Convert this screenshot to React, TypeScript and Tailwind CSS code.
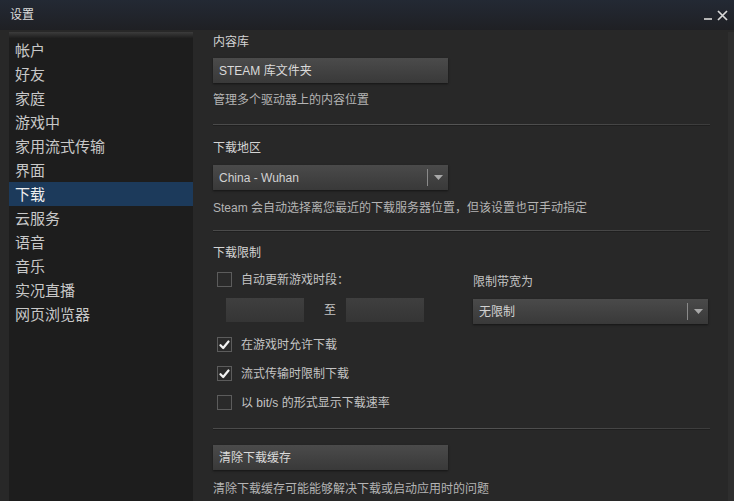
import React from 'react'

const font = { fontFamily: '"Liberation Sans", "Noto Sans CJK SC", sans-serif' }

const sideItems = ['帐户', '好友', '家庭', '游戏中', '家用流式传输', '界面', '下载', '云服务', '语音', '音乐', '实况直播', '网页浏览器']

function Checkbox({ checked }: { checked?: boolean }) {
  return (
    <div className="w-[15px] h-[15px] border border-[#5c5c5c] bg-[#2a2a2a] flex items-center justify-center shrink-0">
      {checked && (
        <svg width="11" height="10" viewBox="0 0 11 10">
          <path d="M1.5 5.2 L4.2 8 L9.5 1.5" fill="none" stroke="#f2f2f2" strokeWidth="2.2" strokeLinecap="round" strokeLinejoin="round" />
        </svg>
      )}
    </div>
  )
}

function CheckRow({ checked, label }: { checked?: boolean; label: string }) {
  return (
    <div className="flex items-center h-[15px] pl-[4px]">
      <Checkbox checked={checked} />
      <span className="ml-[9px] text-[12px] text-[#c4c4c4] leading-none">{label}</span>
    </div>
  )
}

function Dropdown({ value }: { value: string }) {
  return (
    <div className="w-[235px] h-[25px] flex items-center bg-gradient-to-b from-[#4a4a4a] to-[#393939] shadow-[0_1px_2px_rgba(0,0,0,0.5)]">
      <span className="flex-1 pl-[6px] text-[12px] text-[#d2d2d2]">{value}</span>
      <div className="w-px h-[17px] bg-[#8a8a8a]" />
      <div className="w-[20px] flex items-center justify-center">
        <svg width="9" height="5" viewBox="0 0 9 5">
          <path d="M0 0 H9 L4.5 5 Z" fill="#a8a8a8" />
        </svg>
      </div>
    </div>
  )
}

function Button({ label }: { label: string }) {
  return (
    <div className="w-[235px] h-[25px] flex items-center pl-[6px] bg-gradient-to-b from-[#4b4b4b] to-[#393939] shadow-[0_1px_2px_rgba(0,0,0,0.5)] text-[12px] text-[#dadada]">
      {label}
    </div>
  )
}

function Separator() {
  return (
    <div className="w-[497px]">
      <div className="h-px bg-gradient-to-r from-[#4a4a4a] via-[#555555] to-[#3c3c3c]" />
      <div className="h-px bg-[#1f1f1f]" />
    </div>
  )
}

export default function App() {
  return (
    <div className="w-[734px] h-[501px] bg-[#282828] flex flex-col overflow-hidden" style={font}>
      {/* title bar */}
      <div className="h-[30px] shrink-0 flex items-center justify-between bg-gradient-to-b from-[#232934] to-[#1f2024] pl-[10px] pr-[6px]">
        <span className="text-[12px] text-[#dcdcdc]">设置</span>
        <div className="flex items-end gap-[5px]">
          <div className="w-[8px] h-[2px] bg-[#b5b5b5] mb-[1px]" />
          <svg width="11" height="11" viewBox="0 0 11 11">
            <path d="M1 1 L10 10 M10 1 L1 10" stroke="#d8d8d8" strokeWidth="1.7" />
          </svg>
        </div>
      </div>

      <div className="flex flex-1 pt-[2px]">
        {/* sidebar */}
        <div className="ml-[9px] w-[184px] bg-[#1d1d1d] flex flex-col">
          <div className="h-[6px] bg-gradient-to-b from-[#3c3c3c] to-[#1f1f1f]" />
          {sideItems.map((item) => (
            <div
              key={item}
              className={`h-[24px] pl-[6px] pt-[2px] flex items-center text-[15px] ${item === '下载' ? 'bg-[#1c3a5b] text-[#f0f0f0]' : 'text-[#c8c8c8]'}`}
            >
              {item}
            </div>
          ))}
        </div>

        {/* content */}
        <div className="flex-1 pl-[20px] pt-[2px] flex flex-col">
          <div className="text-[12px] text-[#d4d4d4] leading-[16px]">内容库</div>
          <div className="mt-[8px]"><Button label="STEAM 库文件夹" /></div>
          <div className="mt-[9px] text-[12px] text-[#b4b4b4] leading-[16px]">管理多个驱动器上的内容位置</div>
          <div className="mt-[16px]"><Separator /></div>

          <div className="mt-[14px] text-[12px] text-[#d4d4d4] leading-[16px]">下载地区</div>
          <div className="mt-[9px]"><Dropdown value="China - Wuhan" /></div>
          <div className="mt-[10px] text-[12px] text-[#b4b4b4] leading-[16px]">Steam 会自动选择离您最近的下载服务器位置，但该设置也可手动指定</div>
          <div className="mt-[14px]"><Separator /></div>

          <div className="mt-[13px] text-[12px] text-[#d4d4d4] leading-[16px]">下载限制</div>
          <div className="mt-[11px] flex">
            <div className="w-[260px] flex flex-col">
              <CheckRow label="自动更新游戏时段：" />
              <div className="mt-[11px] flex items-center pl-[13px]">
                <div className="w-[78px] h-[24px] bg-gradient-to-b from-[#3f3f3f] to-[#353535]" />
                <span className="w-[42px] pl-[20px] text-[12px] text-[#c4c4c4]">至</span>
                <div className="w-[78px] h-[24px] bg-gradient-to-b from-[#3f3f3f] to-[#353535]" />
              </div>
            </div>
            <div className="flex flex-col pt-[2px]">
              <div className="text-[12px] text-[#c4c4c4] leading-[16px]">限制带宽为</div>
              <div className="mt-[9px]"><Dropdown value="无限制" /></div>
            </div>
          </div>
          <div className="mt-[13px] flex flex-col gap-[14px]">
            <CheckRow checked label="在游戏时允许下载" />
            <CheckRow checked label="流式传输时限制下载" />
            <CheckRow label="以 bit/s 的形式显示下载速率" />
          </div>
          <div className="mt-[18px]"><Separator /></div>

          <div className="mt-[15px]"><Button label="清除下载缓存" /></div>
          <div className="mt-[11px] text-[12px] text-[#b4b4b4] leading-[16px]">清除下载缓存可能能够解决下载或启动应用时的问题</div>
        </div>

        {/* right edge strip */}
        <div className="w-[6px] bg-[#2e2e2e]" />
      </div>
    </div>
  )
}
